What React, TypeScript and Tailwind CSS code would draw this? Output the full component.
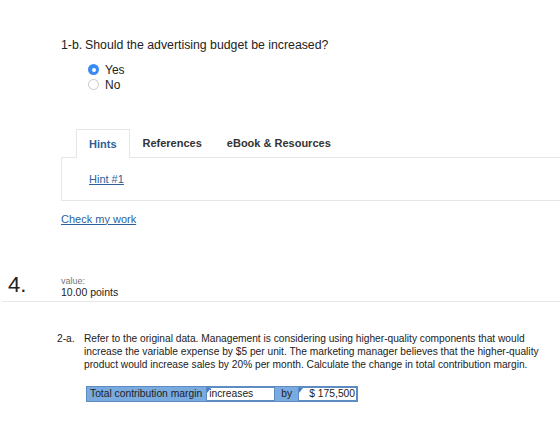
import React from 'react';

const Radio = ({ checked, label }: { checked?: boolean; label: string }) => (
  <label className="flex items-center h-[15px] gap-[6px] text-[12px] text-[#222]">
    {checked ? (
      <span className="w-[11px] h-[11px] rounded-full bg-[#3b8cf2] flex items-center justify-center">
        <span className="w-[4px] h-[4px] rounded-full bg-white" />
      </span>
    ) : (
      <span className="w-[11px] h-[11px] rounded-full border border-[#c9c9c9] bg-white" />
    )}
    <span>{label}</span>
  </label>
);

const Flag = () => (
  <span className="absolute top-0 left-0 w-0 h-0 border-t-[5px] border-t-[#3f7fd0] border-r-[4px] border-r-transparent" />
);

export default function App() {
  return (
    <div className="w-[560px] h-[421px] overflow-hidden bg-white font-['Liberation_Sans',Arial,sans-serif] text-[#222]">
      {/* question 1-b */}
      <div className="pt-[38px] pl-[61px]">
        <div className="flex text-[12.3px] leading-[14px]">
          <span className="w-[24px]">1-b.</span>
          <span>Should the advertising budget be increased?</span>
        </div>

        <div className="mt-[10px] ml-[27px] flex flex-col">
          <Radio checked label="Yes" />
          <Radio label="No" />
        </div>
      </div>

      {/* hints card */}
      <div className="mt-[37px] ml-[61px] w-[520px]">
        <div className="flex items-end h-[28px] pl-[15px] text-[11px] font-bold">
          <div className="h-[29px] px-[12px] flex items-center border border-b-0 border-[#e6e6e6] bg-white text-[#2d5f9a] relative top-[1px]">
            Hints
          </div>
          <div className="h-[28px] px-[13px] flex items-center text-[#333]">References</div>
          <div className="h-[28px] px-[12px] flex items-center text-[#333]">eBook &amp; Resources</div>
        </div>
        <div className="h-[44px] border border-[#e6e6e6] flex items-center pl-[27px]">
          <a className="text-[11px] text-[#2d5f9a] underline">Hint #1</a>
        </div>
      </div>

      <div className="mt-[11px] ml-[61px] h-[14px] flex items-center">
        <a className="text-[11px] text-[#2d5f9a] underline">Check my work</a>
      </div>

      {/* question 4 header */}
      <div className="mt-[48px] ml-[2px] border-b border-[#e8e8e8] h-[28px] flex">
        <div className="w-[59px] pl-[6px] text-[22px] leading-[22px] text-[#222]">4.</div>
        <div className="flex flex-col">
          <span className="text-[9px] leading-[9px] text-[#777] mt-[3px]">value:</span>
          <span className="text-[10.5px] leading-[13px] text-[#222]">10.00 points</span>
        </div>
      </div>

      {/* question 2-a */}
      <div className="mt-[30px] ml-[57px] flex text-[10.2px] leading-[13px] text-[#222]">
        <span className="w-[27px] shrink-0">2-a.</span>
        <p className="w-[455px]">
          Refer to the original data. Management is considering using higher-quality components that would
          increase the variable expense by $5 per unit. The marketing manager believes that the higher-quality
          product would increase sales by 20% per month. Calculate the change in total contribution margin.
        </p>
      </div>

      <div className="mt-[15px] ml-[86px] inline-flex items-stretch h-[16px] bg-[#7aabe0] border border-[#5d8cc2] text-[10.3px] text-[#222]">
        <div className="pl-[3px] pr-[4px] flex items-center">Total contribution margin</div>
        <div className="relative w-[69px] bg-white border border-[#5d8cc2] flex items-center pl-[2px]">
          <Flag />
          increases
        </div>
        <div className="px-[6px] flex items-center">by</div>
        <div className="relative w-[59px] bg-white border border-[#5d8cc2] flex items-center justify-end pr-[1px]">
          <Flag />
          $ 175,500
        </div>
      </div>
    </div>
  );
}
